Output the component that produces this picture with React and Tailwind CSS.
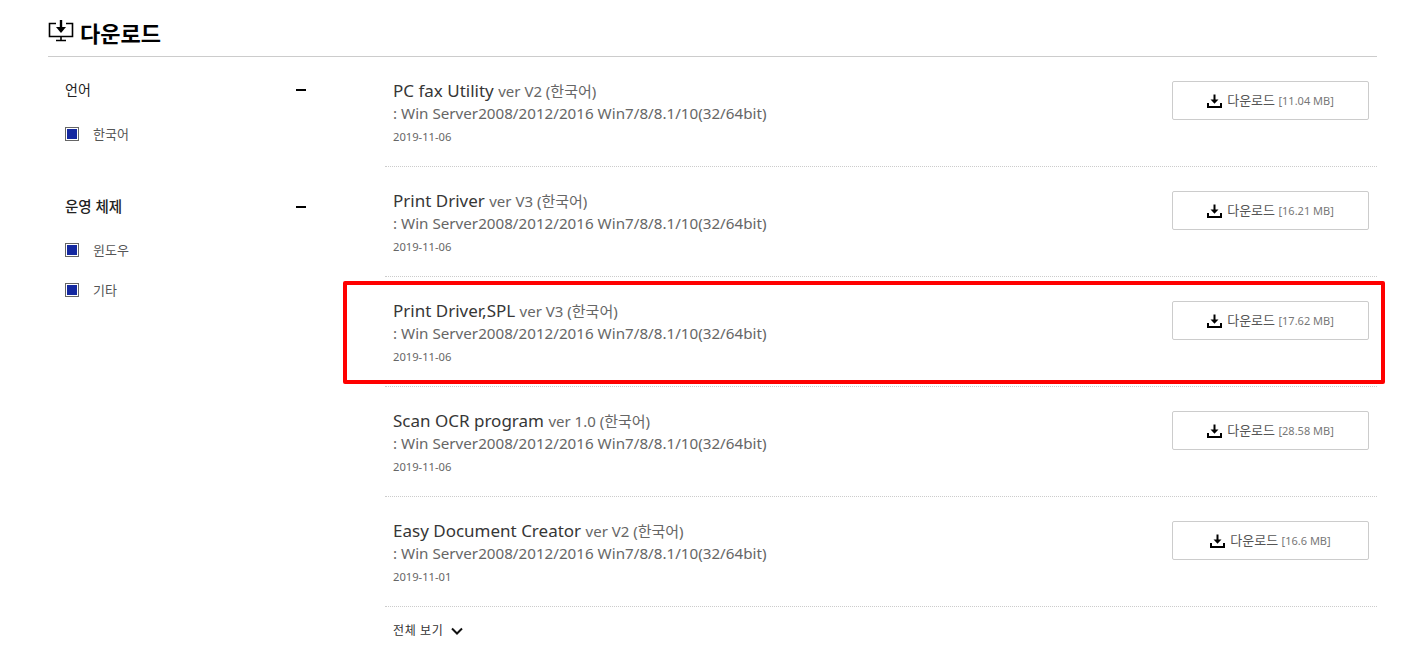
const KR = { fontFamily: '"Noto Sans", "Noto Sans CJK KR", sans-serif' };

function DlIcon({ className = "" }) {
  return (
    <svg width="15" height="14" viewBox="0 0 15 14" className={className} fill="none">
      <path d="M7.5 0.5V8" stroke="#000" strokeWidth="2" />
      <path d="M3.5 5.5L7.5 9.8L11.5 5.5Z" fill="#000" />
      <path d="M1 9V13H14V9" stroke="#000" strokeWidth="2" />
    </svg>
  );
}

function Check({ label }) {
  return (
    <div className="flex items-center h-4">
      <span className="w-[14px] h-[14px] border border-[#666] flex items-center justify-center bg-white">
        <span className="w-[10px] h-[10px] bg-[#1428a0]" />
      </span>
      <span className="ml-[14px] text-[13px] leading-[18px] text-[#555]">{label}</span>
    </div>
  );
}

const rows = [
  ["PC fax Utility", "ver V2", "2019-11-06", "11.04 MB"],
  ["Print Driver", "ver V3", "2019-11-06", "16.21 MB"],
  ["Print Driver,SPL", "ver V3", "2019-11-06", "17.62 MB"],
  ["Scan OCR program", "ver 1.0", "2019-11-06", "28.58 MB"],
  ["Easy Document Creator", "ver V2", "2019-11-01", "16.6 MB"],
];

function Row({ r }) {
  return (
    <div className="h-[110px] border-b border-dotted border-[#ccc] px-2 flex justify-between">
      <div className="pt-[22px]">
        <div className="h-[24px] leading-[24px] text-[17px] text-[#363636] whitespace-nowrap">
          {r[0]} <span className="text-[15px] text-[#666]">{r[1]} (한국어)</span>
        </div>
        <div className="h-[22px] leading-[20px] text-[15.2px] text-[#666] whitespace-nowrap">
          : Win Server2008/2012/2016 Win7/8/8.1/10(32/64bit)
        </div>
        <div className="mt-[2px] h-[20px] leading-[20px] text-[11.2px] text-[#666]">{r[2]}</div>
      </div>
      <div className="pt-[24px]">
        <div className="w-[197px] h-[39px] border border-[#ccc] rounded-[2px] flex items-center justify-center">
          <DlIcon />
          <span className="ml-[5px] pt-px text-[13px] text-[#555] whitespace-nowrap">다운로드 <span className="text-[11px] text-[#777]">[{r[3]}]</span></span>
        </div>
      </div>
    </div>
  );
}

export default function App() {
  return (
    <div className="relative w-[1408px] h-[666px] bg-white overflow-hidden" style={KR}>
      <div className="ml-[48px] w-[1329px]">
        <div className="h-[57px] border-b border-[#ccc] flex items-start pt-[20px]">
          <svg width="26" height="22" viewBox="0 0 26 22" fill="none">
            <path d="M8 3.5H1.5V16.5H24.5V3.5H18" stroke="#000" strokeWidth="1.6" />
            <path d="M8 20.5H18M13 17V20" stroke="#000" strokeWidth="1.6" />
            <path d="M13 0V8" stroke="#000" strokeWidth="2.4" />
            <path d="M8 7H18L13 13Z" fill="#000" />
          </svg>
          <h2 className="ml-[6px] text-[22px] leading-[26px] font-bold text-black">다운로드</h2>
        </div>
        <div className="flex">
          <aside className="w-[337px] pl-[17px] pt-[22px] shrink-0">
            <div className="w-[241px] flex items-center justify-between h-5 text-[14px] text-[#222]">
              <span>언어</span>
              <span className="w-[10px] h-[2px] bg-black mt-[2px]" />
            </div>
            <div className="mt-[27px]"><Check label="한국어" /></div>
            <div className="mt-[55px] w-[241px] flex items-center justify-between h-5 text-[14.5px] text-[#222] font-medium">
              <span>운영 체제</span>
              <span className="w-[10px] h-[2px] bg-black" />
            </div>
            <div className="mt-[25px]"><Check label="윈도우" /></div>
            <div className="mt-6"><Check label="기타" /></div>
          </aside>
          <main className="flex-1">
            {rows.map((r) => <Row key={r[0]} r={r} />)}
            <div className="px-2 pt-[15px] flex items-center text-[12px] text-[#333]">
              <span className="tracking-[0.6px]">전체 보기</span>
              <svg width="12" height="8" viewBox="0 0 12 8" fill="none" className="ml-[8px]">
                <path d="M1 1.5L6 6.5L11 1.5" stroke="#111" strokeWidth="2" />
              </svg>
            </div>
          </main>
        </div>
      </div>
      <div className="absolute left-[343px] top-[281px] w-[1042px] h-[103px] border-[4px] border-[#ff0000] rounded-[2px]" />
    </div>
  );
}
